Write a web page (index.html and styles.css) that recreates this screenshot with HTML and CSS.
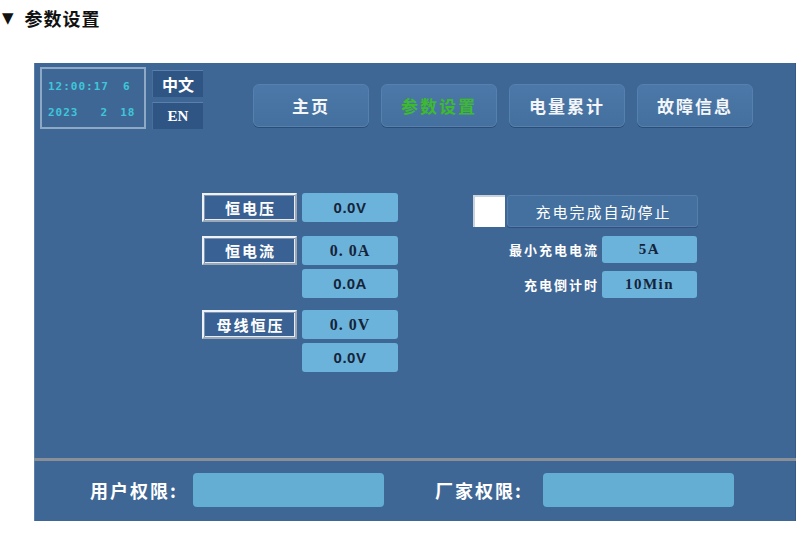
FILE: index.html
```html
<!DOCTYPE html>
<html lang="zh-CN">
<head>
<meta charset="utf-8">
<title>参数设置</title>
<link rel="stylesheet" href="styles.css">
</head>
<body>
<div class="title"><span class="tri">▼</span><span class="title-text">参数设置</span></div>
<div class="panel">
  <div class="top">
    <div class="clock">
      <div class="clock-row"><span class="c1">12:00:17</span><span class="c2">6</span></div>
      <div class="clock-row"><span class="c1">2023</span><span class="c3">2</span><span class="c4">18</span></div>
    </div>
    <div class="lang">
      <div class="lang-btn">中文</div>
      <div class="lang-btn en">EN</div>
    </div>
    <nav class="nav">
      <div class="nav-btn">主页</div>
      <div class="nav-btn active">参数设置</div>
      <div class="nav-btn">电量累计</div>
      <div class="nav-btn">故障信息</div>
    </nav>
  </div>
  <div class="main">
    <div class="left">
      <div class="group">
        <div class="row"><div class="label-box">恒电压</div><div class="val sans">0.0V</div></div>
      </div>
      <div class="group">
        <div class="row"><div class="label-box">恒电流</div><div class="val serif">0. 0A</div></div>
        <div class="row"><div class="spacer"></div><div class="val sans">0.0A</div></div>
      </div>
      <div class="group">
        <div class="row"><div class="label-box">母线恒压</div><div class="val serif">0. 0V</div></div>
        <div class="row"><div class="spacer"></div><div class="val sans">0.0V</div></div>
      </div>
    </div>
    <div class="right">
      <div class="check-row">
        <div class="checkbox"></div>
        <div class="auto-btn">充电完成自动停止</div>
      </div>
      <div class="param-row first"><span class="param-label">最小充电电流</span><div class="val small serif">5A</div></div>
      <div class="param-row"><span class="param-label">充电倒计时</span><div class="val small serif">10Min</div></div>
    </div>
  </div>
  <div class="divider"></div>
  <div class="footer">
    <div class="auth user"><span class="auth-label">用户权限:</span><div class="auth-input"></div></div>
    <div class="auth maker"><span class="auth-label">厂家权限:</span><div class="auth-input"></div></div>
  </div>
</div>
</body>
</html>
```

FILE: styles.css
```css
html, body {
  margin: 0;
  padding: 0;
  background: #ffffff;
}
body {
  width: 803px;
  height: 534px;
  overflow: hidden;
  font-family: "Noto Sans CJK SC", "Liberation Sans", sans-serif;
}
.title {
  display: flex;
  align-items: center;
  gap: 11px;
  height: 22px;
  margin-top: 7px;
  padding-left: 2px;
  font-size: 18px;
  font-weight: bold;
  color: #111;
}
.title-text {
  letter-spacing: 1px;
}
.tri {
  font-family: "DejaVu Sans", sans-serif;
  font-size: 15px;
}
.panel {
  margin-left: 34px;
  margin-top: 34px;
  width: 762px;
  height: 458px;
  background: #3f6796;
  display: flex;
  flex-direction: column;
  box-shadow: inset 1px 0 0 #5a7fab, inset -1px 0 0 #355a88;
}
.top {
  display: flex;
  align-items: flex-start;
  padding: 4px 0 0 6px;
  height: 62px;
}
.clock {
  width: 106px;
  height: 62px;
  box-sizing: border-box;
  border: 2px solid #8ea9c6;
  display: flex;
  flex-direction: column;
  justify-content: center;
  gap: 12px;
  padding-left: 6px;
  padding-top: 3px;
  font-family: "DejaVu Sans Mono", "Liberation Mono", monospace;
  font-size: 11px;
  line-height: 14px;
  font-weight: bold;
  letter-spacing: 1px;
  color: #3ec6d8;
}
.clock-row {
  display: flex;
}
.c2 { margin-left: 14px; }
.c3 { margin-left: 22px; }
.c4 { margin-left: 12px; }
.lang {
  margin-left: 6px;
  margin-top: 3px;
  display: flex;
  flex-direction: column;
  gap: 5px;
}
.lang-btn {
  width: 51px;
  height: 27px;
  box-sizing: border-box;
  background: #2f5585;
  border-top: 1px solid #5c80ab;
  border-left: 1px solid #4a6f9c;
  display: flex;
  align-items: center;
  justify-content: center;
  color: #fff;
  font-size: 16px;
  font-weight: bold;
}
.lang-btn.en {
  font-family: "Liberation Serif", serif;
  font-size: 15px;
}
.nav {
  display: flex;
  gap: 12px;
  margin-left: 50px;
  margin-top: 17px;
}
.nav-btn {
  width: 116px;
  height: 43px;
  box-sizing: border-box;
  border-radius: 6px;
  background: linear-gradient(#4b78a8, #44709f);
  border: 1px solid #5680ae;
  box-shadow: 0 1px 0 #2c4d78;
  display: flex;
  align-items: center;
  justify-content: center;
  color: #f4f6fa;
  font-size: 17px;
  font-weight: bold;
  letter-spacing: 2px;
}
.nav-btn.active {
  color: #3dbb2c;
}
.main {
  flex: 1;
  display: flex;
  align-items: flex-start;
  padding-top: 64px;
  padding-left: 168px;
}
.left {
  display: flex;
  flex-direction: column;
  gap: 14px;
  width: 196px;
}
.left .group:last-child {
  margin-top: -2px;
}
.group {
  display: flex;
  flex-direction: column;
  gap: 4px;
}
.row {
  display: flex;
  gap: 5px;
}
.label-box, .spacer {
  width: 95px;
  height: 29px;
  box-sizing: border-box;
}
.label-box {
  background: #3a6193;
  border: 2px solid;
  border-color: #eef2f6 #9aa8b8 #9aa8b8 #eef2f6;
  box-shadow: inset 1px 1px 0 #7d95b3, inset -1px -1px 0 #e6ecf2;
  display: flex;
  align-items: center;
  justify-content: center;
  color: #fff;
  font-size: 15px;
  font-weight: bold;
  letter-spacing: 2px;
  padding-left: 2px;
}
.val {
  width: 96px;
  height: 29px;
  border-radius: 3px;
  background: #6bb3da;
  display: flex;
  align-items: center;
  justify-content: center;
  color: #16243a;
  font-weight: bold;
  font-size: 15px;
}
.val.sans {
  font-family: "Liberation Sans", sans-serif;
  letter-spacing: 0.5px;
}
.val.serif {
  font-family: "Liberation Serif", "Noto Sans CJK SC", serif;
  font-size: 16px;
  letter-spacing: 1px;
}
.right {
  margin-left: 75px;
  margin-top: 2px;
  display: flex;
  flex-direction: column;
}
.check-row {
  display: flex;
  gap: 2px;
}
.checkbox {
  width: 32px;
  height: 32px;
  box-sizing: border-box;
  background: #ffffff;
  border-top: 2px solid #c9d3de;
  border-left: 2px solid #c9d3de;
}
.auto-btn {
  width: 191px;
  height: 32px;
  box-sizing: border-box;
  border-radius: 3px;
  background: #4470a0;
  border: 1px solid #557eac;
  box-shadow: 0 1px 0 #2f5080;
  display: flex;
  align-items: center;
  justify-content: center;
  color: #fff;
  font-size: 15px;
  letter-spacing: 2px;
  padding-left: 2px;
}
.param-row {
  display: flex;
  align-items: center;
  justify-content: flex-end;
  gap: 3px;
  margin-top: 8px;
  width: 224px;
}
.param-row.first {
  margin-top: 9px;
}
.param-label {
  color: #fff;
  font-size: 13px;
  font-weight: bold;
  letter-spacing: 2px;
}
.val.small {
  width: 95px;
  height: 27px;
  font-size: 15px;
  letter-spacing: 1.5px;
}
.divider {
  height: 3px;
  background: #8a8e96;
  margin-bottom: 12px;
}
.footer {
  display: flex;
  height: 48px;
  align-items: flex-start;
}
.auth {
  display: flex;
  align-items: center;
}
.auth.user {
  margin-left: 56px;
}
.auth.maker {
  margin-left: 51px;
}
.auth-label {
  width: 103px;
  color: #fff;
  font-size: 18px;
  font-weight: bold;
  letter-spacing: 2px;
}
.auth.maker .auth-label {
  width: 108px;
}
.auth-input {
  width: 191px;
  height: 34px;
  border-radius: 4px;
  background: #64add3;
  box-shadow: 0 1px 0 #3a6899;
}
```
